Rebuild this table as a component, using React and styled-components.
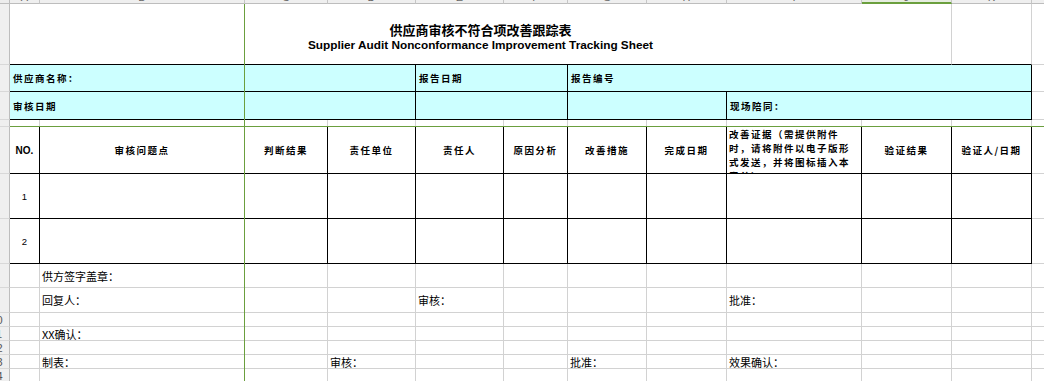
import React from "react";
import styled, { createGlobalStyle } from "styled-components";

const GRID = "#d2d2d2";
const INK = "#000";
const CYAN = "#ccffff";
const FREEZE = "#6b9f3e";
const CJK = `"Noto Sans CJK SC", "Noto Sans", sans-serif`;
const LATIN = `"Liberation Sans", Arial, sans-serif`;

const widths = [10, 30, 205, 83, 88, 88, 64, 79, 80, 135, 90, 80, 80];
const heights = [4, 61, 27, 28, 7, 47, 45, 45, 24, 25, 14, 14, 14, 14, 14];
const letters = ["A", "B", "C", "D", "E", "F", "G", "H", "I", "J", "K", "L"];

const GlobalStyle = createGlobalStyle`
  html, body {
    margin: 0;
    padding: 0;
    background: #fff;
    overflow: hidden;
  }
`;

const Viewport = styled.div`
  position: relative;
  width: 1044px;
  height: 381px;
  overflow: hidden;
  background: #fff;
`;

const Sheet = styled.div`
  display: grid;
  grid-template-columns: ${widths.map((w) => w + "px").join(" ")};
  grid-template-rows: ${heights.map((h) => h + "px").join(" ")};
`;

const Corner = styled.div`
  box-sizing: border-box;
  background: #ececec;
  border-right: 1px solid #bdbdbd;
  border-bottom: 1px solid #bdbdbd;
`;

const ColHead = styled.div`
  box-sizing: border-box;
  background: ${(p) => (p.$active ? "#e6ede0" : "#efefef")};
  border-right: 1px solid #c6c6c6;
  border-bottom: ${(p) => (p.$active ? `2px solid ${FREEZE}` : "1px solid #bdbdbd")};
  overflow: hidden;
  display: flex;
  justify-content: center;
  font: 11px ${LATIN};
  color: #666;
  span {
    display: block;
    height: 20px;
    line-height: 20px;
    margin-top: -13px;
  }
`;

const RowHead = styled.div`
  box-sizing: border-box;
  background: #efefef;
  border-right: 1px solid #bdbdbd;
  border-bottom: 1px solid #d8d8d8;
  overflow: hidden;
  display: flex;
  align-items: center;
  font: 11px ${LATIN};
  color: #555;
  span {
    flex-shrink: 0;
    width: 25px;
    margin-left: -16px;
    text-align: center;
  }
`;

const Cell = styled.div`
  grid-column: span ${(p) => p.$span || 1};
  box-sizing: border-box;
  min-width: 0;
  border-right: 1px solid ${(p) => p.$r || GRID};
  border-bottom: 1px solid ${(p) => p.$b || GRID};
  background: ${(p) => p.$bg || "#fff"};
  display: flex;
  align-items: center;
  justify-content: ${(p) => (p.$center ? "center" : "flex-start")};
  padding-left: ${(p) => p.$pad || 0}px;
  overflow: hidden;
  white-space: nowrap;
`;

const TitleCell = styled(Cell)`
  flex-direction: column;
  align-items: center;
  justify-content: flex-start;
  padding-top: 18px;
`;

const TitleZh = styled.div`
  font-family: ${CJK};
  font-weight: 700;
  font-size: 13px;
  line-height: 16px;
  color: #000;
`;

const TitleEn = styled.div`
  font-family: ${LATIN};
  font-weight: 700;
  font-size: 11.8px;
  line-height: 13px;
  margin-top: 1px;
  color: #000;
`;

const Label = styled.span`
  font-family: ${CJK};
  font-weight: 700;
  font-size: 9.5px;
  letter-spacing: 1.5px;
  line-height: 14px;
  color: #000;
`;

const WrapCell = styled(Cell)`
  align-items: flex-start;
  white-space: normal;
  padding: 0 6px 0 2px;
  ${Label} {
    display: block;
    line-height: 14px;
  }
`;

const Num = styled.span`
  font-family: ${LATIN};
  font-size: ${(p) => (p.$bold ? 10 : 9.5)}px;
  font-weight: ${(p) => (p.$bold ? 700 : 400)};
  color: #000;
`;

const Note = styled.span`
  font-family: ${CJK};
  font-size: 11px;
  line-height: 14px;
  color: #000;
`;

const FreezeV = styled.div`
  position: absolute;
  left: 244px;
  top: 4px;
  bottom: 0;
  width: 1px;
  background: ${FREEZE};
`;

const FreezeH = styled.div`
  position: absolute;
  left: 10px;
  right: 0;
  top: 126px;
  height: 1px;
  background: ${FREEZE};
`;

const box = { r: INK, b: INK };
const cyan = { r: INK, b: INK, bg: CYAN };
const blank = (n, extra = {}) => Array.from({ length: n }, () => ({ ...extra }));

const headLabels = ["审核问题点", "判断结果", "责任单位", "责任人", "原因分析", "改善措施", "完成日期"];

const rows = [
  [{ span: 10, b: INK, kind: "title" }, { b: INK }, {}],
  [
    { span: 4, ...cyan, label: "供应商名称：" },
    { span: 2, ...cyan, label: "报告日期" },
    { span: 5, ...cyan, label: "报告编号" },
    {},
  ],
  [
    { span: 4, ...cyan, label: "审核日期" },
    { span: 2, ...cyan },
    { span: 2, ...cyan },
    { span: 3, ...cyan, label: "现场陪同：" },
    {},
  ],
  [...blank(11, { b: INK }), {}],
  [
    { ...box, kind: "no" },
    ...headLabels.map((t) => ({ ...box, head: t })),
    { ...box, kind: "wrap", label: "改善证据（需提供附件时，请将附件以电子版形式发送，并将图标插入本表单）" },
    { ...box, head: "验证结果" },
    { ...box, head: "验证人/日期" },
    {},
  ],
  [{ ...box, num: "1" }, ...blank(10, box), {}],
  [{ ...box, num: "2" }, ...blank(10, box), {}],
  [{}, { note: "供方签字盖章：" }, ...blank(10)],
  [{}, { note: "回复人：" }, {}, {}, { note: "审核：" }, {}, {}, {}, { note: "批准：" }, {}, {}, {}],
  blank(12),
  [{}, { note: "XX确认：" }, ...blank(10)],
  blank(12),
  [{}, { note: "制表：" }, {}, { note: "审核：" }, {}, {}, { note: "批准：" }, {}, { note: "效果确认：" }, {}, {}, {}],
  blank(12),
];

function renderCell(c, key) {
  const common = { key, $span: c.span, $r: c.r, $b: c.b, $bg: c.bg };
  if (c.kind === "title") {
    return (
      <TitleCell {...common}>
        <TitleZh>供应商审核不符合项改善跟踪表</TitleZh>
        <TitleEn>Supplier Audit Nonconformance Improvement Tracking Sheet</TitleEn>
      </TitleCell>
    );
  }
  if (c.kind === "wrap") {
    return (
      <WrapCell {...common}>
        <Label>{c.label}</Label>
      </WrapCell>
    );
  }
  if (c.kind === "no") {
    return (
      <Cell {...common} $center>
        <Num $bold>NO.</Num>
      </Cell>
    );
  }
  if (c.head) {
    return (
      <Cell {...common} $center>
        <Label>{c.head}</Label>
      </Cell>
    );
  }
  if (c.num) {
    return (
      <Cell {...common} $center>
        <Num>{c.num}</Num>
      </Cell>
    );
  }
  if (c.label) {
    return (
      <Cell {...common} $pad={3}>
        <Label>{c.label}</Label>
      </Cell>
    );
  }
  if (c.note) {
    return (
      <Cell {...common} $pad={2}>
        <Note>{c.note}</Note>
      </Cell>
    );
  }
  return <Cell {...common} />;
}

export default function App() {
  return (
    <>
      <GlobalStyle />
      <Viewport>
        <Sheet>
          <Corner />
          {letters.map((l) => (
            <ColHead key={l} $active={l === "J"}>
              <span>{l}</span>
            </ColHead>
          ))}
          {rows.map((row, i) => (
            <React.Fragment key={i}>
              <RowHead>
                <span>{i + 1}</span>
              </RowHead>
              {row.map((c, j) => renderCell(c, `${i}-${j}`))}
            </React.Fragment>
          ))}
        </Sheet>
        <FreezeV />
        <FreezeH />
      </Viewport>
    </>
  );
}
